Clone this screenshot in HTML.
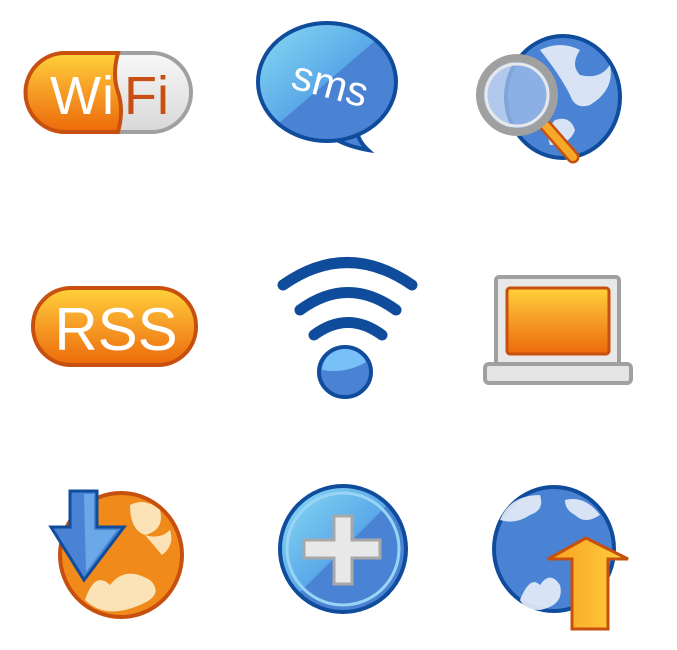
<!DOCTYPE html>
<html><head><meta charset="utf-8"><style>html,body{margin:0;padding:0;background:#fff;width:677px;height:650px;overflow:hidden}</style></head>
<body>
<svg width="677" height="650" viewBox="0 0 677 650" xmlns="http://www.w3.org/2000/svg">
<defs>
<linearGradient id="org" x1="0" y1="0" x2="0" y2="1"><stop offset="0" stop-color="#ffd23a"/><stop offset="0.45" stop-color="#f7a028"/><stop offset="1" stop-color="#ec6a0a"/></linearGradient>
<linearGradient id="gry" x1="0" y1="0" x2="0" y2="1"><stop offset="0" stop-color="#f8f8f8"/><stop offset="1" stop-color="#d8d8d8"/></linearGradient>
<linearGradient id="blu" x1="0" y1="0" x2="1" y2="1"><stop offset="0" stop-color="#8adcf4"/><stop offset="0.5" stop-color="#5aa8e8"/><stop offset="0.5" stop-color="#4a82d4"/><stop offset="1" stop-color="#4a82d4"/></linearGradient>
<linearGradient id="arr" x1="0" y1="0" x2="1" y2="0"><stop offset="0" stop-color="#f8a020"/><stop offset="1" stop-color="#ffd040"/></linearGradient>
</defs>
<!-- WiFi pill -->
<rect x="26" y="53" width="165" height="79" rx="39.5" fill="url(#gry)" stroke="#a0a0a0" stroke-width="4"/>
<path d="M65,53 L118,53 Q112,75 118,92 Q124,110 118,132 L65,132 A39.5,39.5 0 0 1 65,53Z" fill="url(#org)" stroke="#c8500e" stroke-width="4"/>
<text x="50" y="114" font-family="Liberation Sans,sans-serif" font-size="54" fill="#fff" textLength="64">Wi</text>
<text x="124" y="114" font-family="Liberation Sans,sans-serif" font-size="54" fill="#c84e12">Fi</text>
<!-- SMS -->
<path d="M330,136 Q345,146 368,150 Q355,138 358,126Z" fill="#4a82d4" stroke="#104c9c" stroke-width="4"/>
<ellipse cx="327" cy="82" rx="69" ry="59" fill="url(#blu)" stroke="#104c9c" stroke-width="4"/>
<text x="330" y="98" text-anchor="middle" transform="rotate(15 330 85)" font-family="Liberation Sans,sans-serif" font-size="42" fill="#fff">sms</text>
<!-- globe with magnifier -->
<ellipse cx="563" cy="97" rx="57" ry="61" fill="#4a82d4" stroke="#104c9c" stroke-width="4"/>
<path d="M540,50 q20,-10 40,0 q-10,15 0,25 q20,5 30,-10 q5,25 -20,40 q-15,5 -20,-10 q-10,-20 -30,-45z M555,120 q15,-5 20,10 q-5,15 -25,15 q-5,-15 5,-25z" fill="#e8eef8" opacity="0.9"/>
<line x1="545" y1="125" x2="573" y2="157" stroke="#c8500e" stroke-width="13" stroke-linecap="round"/>
<line x1="545" y1="125" x2="573" y2="157" stroke="#f8a828" stroke-width="8" stroke-linecap="round"/>
<circle cx="517" cy="95" r="37" fill="#9cbce8" fill-opacity="0.8" stroke="#a0a0a0" stroke-width="8"/>
<circle cx="517" cy="95" r="31" fill="none" stroke="#e8e8e8" stroke-width="3"/>
<!-- RSS -->
<rect x="33" y="288" width="163" height="77" rx="38" fill="url(#org)" stroke="#c8500e" stroke-width="4"/>
<text x="116" y="350" text-anchor="middle" font-family="Liberation Sans,sans-serif" font-size="60" fill="#fff">RSS</text>
<!-- wifi waves -->
<g fill="none" stroke="#104c9c" stroke-width="11" stroke-linecap="round">
<path d="M283,285 Q347,240 412,285"/>
<path d="M300,310 Q348,275 396,310"/>
<path d="M314,335 Q348,310 382,335"/>
</g>
<ellipse cx="345" cy="372" rx="26" ry="25" fill="#4a82d4" stroke="#104c9c" stroke-width="4"/>
<path d="M322,370 a23,22 0 0 1 44,-8 q-20,12 -44,8z" fill="#78c0f8"/>
<!-- laptop -->
<rect x="496" y="277" width="123" height="90" rx="3" fill="#e8e8e8" stroke="#a0a0a0" stroke-width="4"/>
<rect x="507" y="288" width="102" height="66" rx="3" fill="url(#org)" stroke="#c8500e" stroke-width="3"/>
<rect x="485" y="364" width="146" height="19" rx="4" fill="#e4e4e4" stroke="#a0a0a0" stroke-width="4"/>
<!-- download globe -->
<ellipse cx="121" cy="555" rx="61" ry="62" fill="#f08a1a" stroke="#c8500e" stroke-width="4"/>
<path d="M130,505 q15,-8 30,5 q5,20 -15,25 q-15,-5 -15,-30z M85,600 q10,-30 25,-15 q15,-20 40,-5 q15,15 -10,25 q-35,15 -55,-5z M145,535 q15,5 25,-5 q5,15 -8,25z" fill="#fbe8c0" opacity="0.95"/>
<path d="M70,491 L97,491 L97,527 L124,527 L84,580 L51,527 L70,527Z" fill="#4a82d4" stroke="#104c9c" stroke-width="3"/>
<path d="M84,494 L94,494 L94,530 L117,530 L86,572Z" fill="#78b8f0" opacity="0.7"/>
<!-- plus -->
<ellipse cx="343" cy="549" rx="63" ry="63" fill="url(#blu)" stroke="#104c9c" stroke-width="4"/>
<ellipse cx="343" cy="549" rx="56" ry="56" fill="none" stroke="#9ad4f4" stroke-width="3"/>
<path d="M334,516 L352,516 L352,540 L380,540 L380,558 L352,558 L352,584 L334,584 L334,558 L304,558 L304,540 L334,540Z" fill="#e8e8e8" stroke="#a8a8a8" stroke-width="3"/>
<!-- upload globe -->
<ellipse cx="554" cy="549" rx="60" ry="62" fill="#4a82d4" stroke="#104c9c" stroke-width="4"/>
<path d="M500,520 q10,-25 40,-25 q5,15 -10,20 q-15,10 -30,5z M565,500 q20,-5 35,15 q-15,10 -25,0 q-10,-5 -10,-15z M520,600 q10,-25 20,-15 q10,-15 20,0 q5,20 -20,25 q-15,0 -20,-10z" fill="#e8eef8" opacity="0.9"/>
<path d="M586,552 L628,573 L608,573 L608,643 L572,643 L572,573 L548,573Z" fill="url(#arr)" stroke="#c8500e" stroke-width="3" transform="translate(0,-14)"/>
</svg>
</body></html>
